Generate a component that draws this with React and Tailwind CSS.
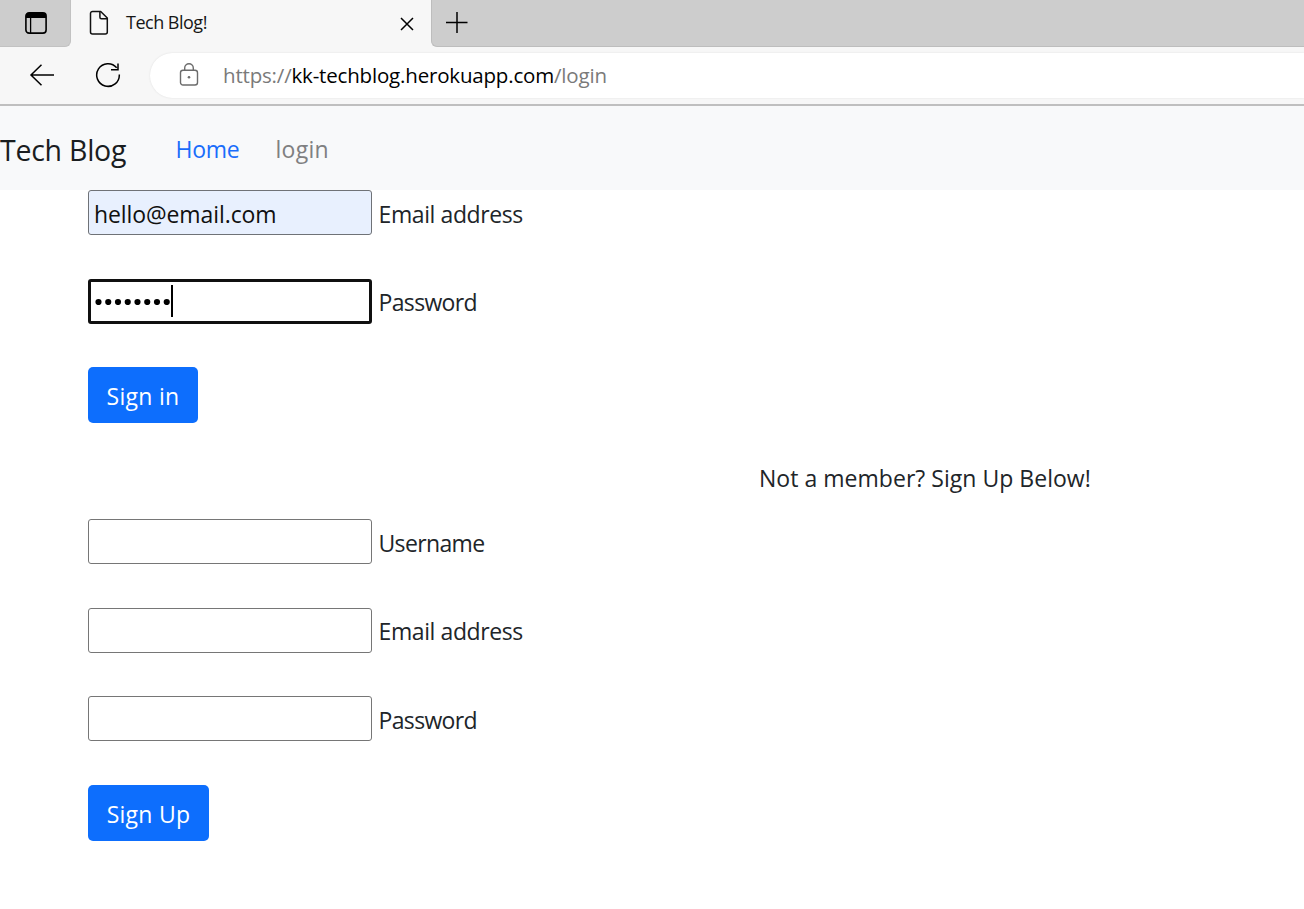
function TitleBar() {
  return (
    <div className="flex h-[47px] bg-[#f7f7f7]">
      <div className="flex h-[47px] w-[71px] items-center rounded-br-md border-b border-r border-[#c2c2c2] bg-[#cdcdcd] pl-[25px]">
        <svg width="22" height="22" viewBox="0 0 22 22" fill="none" stroke="#000" strokeWidth="1.6">
          <rect x="0.9" y="0.9" width="20.2" height="20.2" rx="3.2" />
          <path d="M1 4a3 3 0 0 1 3-3h14a3 3 0 0 1 3 3v2H1z" fill="#000" stroke="none" />
          <path d="M5.6 6v15" strokeWidth="1.3" />
        </svg>
      </div>
      <div className="flex w-[360px] items-center">
        <svg className="-mt-[2px] ml-[18px]" width="20" height="26" viewBox="0 0 20 26" fill="none" stroke="#111" strokeWidth="1.5" strokeLinejoin="round">
          <path d="M3.5 1.5h8.2L18.3 8v14a2 2 0 0 1-2 2H3.5a2 2 0 0 1-2-2v-18.5a2 2 0 0 1 2-2z" />
          <path d="M10.9 1.5v5.8a1.5 1.5 0 0 0 1.5 1.5h5.9" />
        </svg>
        <span className="ml-[17px] w-[265px] whitespace-nowrap pb-[3px] text-[18px] leading-6 tracking-[-0.5px] text-[#161616]">Tech Blog!</span>
        <svg className="ml-[9px]" width="14" height="14" viewBox="0 0 14 14" stroke="#000" strokeWidth="1.5">
          <path d="M1 1l12 12M13 1L1 13" />
        </svg>
      </div>
      <div className="flex flex-1 rounded-bl-md border-b border-l border-[#bdbdbd] bg-[#cdcdcd]">
        <svg className="mt-[12px] ml-[14px]" width="22" height="21" viewBox="0 0 22 21" stroke="#000" strokeWidth="1.5">
          <path d="M0 10.5h21.5M11 0v21" />
        </svg>
      </div>
    </div>
  );
}

function AddressBar() {
  return (
    <div className="flex h-[59px] items-center border-b-2 border-[#bfbfbf] bg-[#f7f7f7] pb-px">
      <svg className="-mt-px ml-[29px]" width="26" height="22" viewBox="0 0 26 22" fill="none" stroke="#000" strokeWidth="1.5">
        <path d="M12.5 0.8L2 11l10.5 10.2M2 11h23" />
      </svg>
      <svg className="-mt-px ml-[40px]" width="26" height="26" viewBox="0 0 26 26" fill="none" stroke="#000" strokeWidth="1.5">
        <path d="M24.3 12.5a11.3 11.3 0 1 1-2.600-6.700M23 1.5v6.2h-7" />
      </svg>
      <div className="ml-[29px] flex h-[45px] flex-1 items-center rounded-l-full bg-white pl-[29px] shadow-[0_0_2px_#dddddd]">
        <svg width="20" height="24" viewBox="0 0 20 24" fill="none" stroke="#6c6c6c" strokeWidth="1.4">
          <rect x="1.5" y="7.3" width="17" height="14.7" rx="2.5" />
          <path d="M5.7 7.3V5a4.300 4.300 0 0 1 8.600 0v2.300" />
          <circle cx="10" cy="14.3" r="1.3" fill="#6c6c6c" stroke="none" />
        </svg>
        <span className="ml-[24px] whitespace-nowrap text-[20.5px] leading-7 tracking-[-0.18px] text-[#7a7a7a]">
          https://<span className="text-black">kk-techblog.herokuapp.com</span>/login
        </span>
      </div>
    </div>
  );
}

function Field({ label, children, className, labelClass = "mt-[6px] tracking-[-0.4px]" }) {
  return (
    <div className="mb-[43.5px] flex h-[45px]">
      <div className={"flex h-[45px] w-[284px] items-center rounded-[3px] pt-[3px] " + className}>{children}</div>
      <label className={"ml-[6.5px] whitespace-nowrap text-[23px] leading-9 " + labelClass}>{label}</label>
    </div>
  );
}

const plain = "border border-[#767676] bg-white";
const button = "block h-14 rounded-[5px] bg-[#0d6efd] text-[23px] leading-9 tracking-[0.27px] whitespace-nowrap text-white";

export default function App() {
  return (
    <div className="h-[909px] overflow-hidden bg-white font-['Open_Sans',sans-serif] text-[#212529]">
      <TitleBar />
      <AddressBar />
      <nav className="flex h-[84px] items-center bg-[#f8f9fa] pt-[3px] whitespace-nowrap">
        <span className="w-[175.5px] text-[28.5px] leading-10 tracking-[-0.25px] text-[#1a1d1f]">Tech Blog</span>
        <span className="w-[100px] text-[23px] tracking-[-0.3px] text-[#1a6dfa]">Home</span>
        <span className="text-[23px] tracking-[0.25px] text-[#7f8081]">login</span>
      </nav>
      <main className="pl-[88px]">
        <Field label="Email address" className="border border-[#6f7277] bg-[#e8f0fe]">
          <span className="pl-[5px] text-[23px] leading-9 tracking-[-0.09px] text-[#101010]">hello@email.com</span>
        </Field>
        <Field label="Password" labelClass="mt-[5px] tracking-[-0.65px]" className="border-[3px] border-[#101010] bg-white">
          <div className="-mt-[4px] flex items-center pl-[3.5px]">
            <svg width="78" height="8" viewBox="0 0 78 8" fill="#000">
              {[0, 1, 2, 3, 4, 5, 6, 7].map((i) => (
                <circle key={i} cx={3.5 + i * 9.75} cy="5" r="3.1" />
              ))}
            </svg>
            <span className="-ml-[2px] h-8 w-[2px] bg-black" />
          </div>
        </Field>
        <button className={button + " w-[110px] pt-px"}>Sign in</button>
        <p className="mt-[37px] mb-[23px] ml-[671px] whitespace-nowrap text-[23px] leading-9 tracking-[0.03px]">Not a member? Sign Up Below!</p>
        <Field label="Username" labelClass="mt-[6px] tracking-[-0.65px]" className={plain} />
        <Field label="Email address" labelClass="mt-[5px] tracking-[-0.4px]" className={plain} />
        <Field label="Password" labelClass="mt-[6px] tracking-[-0.65px]" className={plain} />
        <button className={button + " w-[121px] pt-[3px]"}>Sign Up</button>
      </main>
    </div>
  );
}
